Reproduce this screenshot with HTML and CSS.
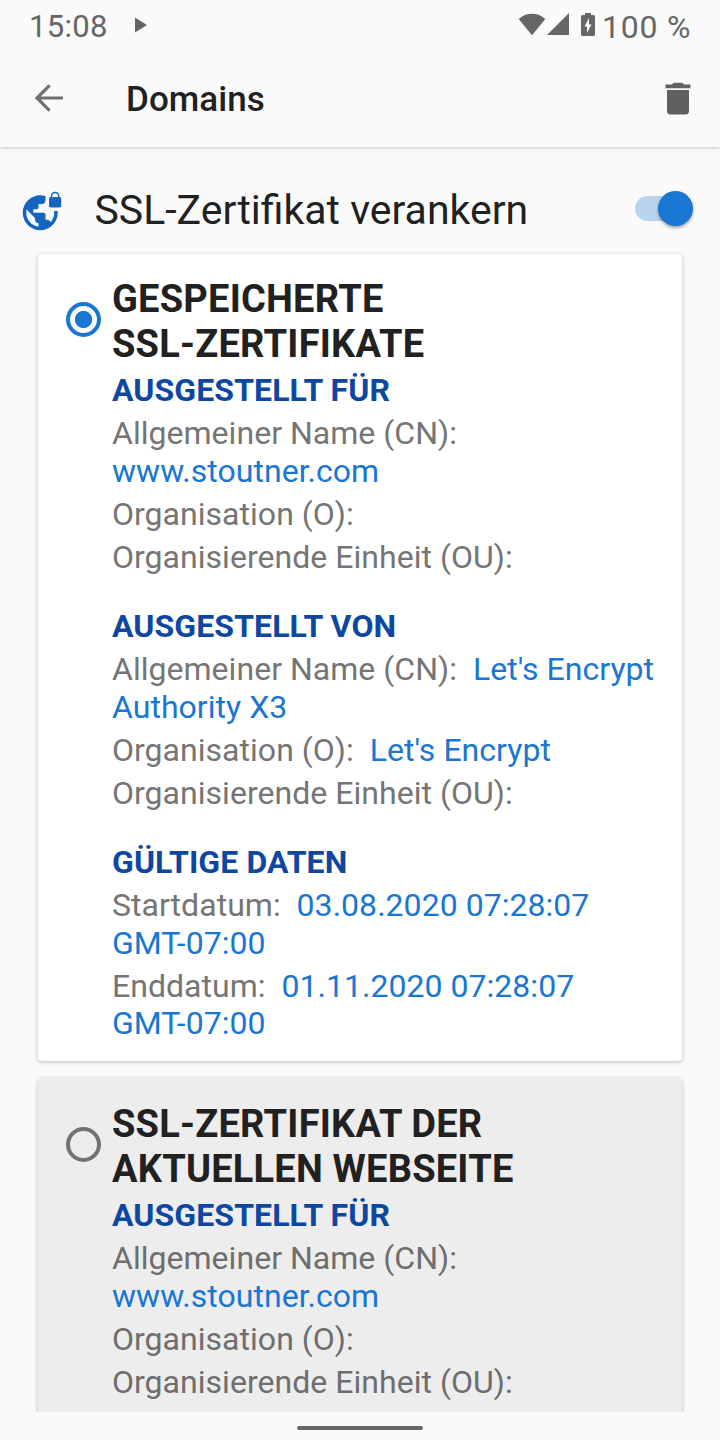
FILE: index.html
```html
<!DOCTYPE html>
<html lang="de">
<head>
<meta charset="utf-8">
<title>Domains</title>
<link rel="stylesheet" href="styles.css">
</head>
<body>
<div class="screen">
  <header class="top">
    <div class="status">
      <span class="clock">15:08</span>
      <svg class="play" width="12" height="16" viewBox="0 0 12 16"><path d="M0 .5L12 8 0 15.500z"/></svg>
      <svg class="wifi" width="28" height="23" viewBox="0 0 28 23"><path d="M14 22.300L.7 5.900C4.500 2.400 9 .7 14 .7s9.500 1.700 13.300 5.200z"/></svg>
      <svg class="cell" width="22" height="22" viewBox="0 0 22 22"><path d="M22 0v22H0z"/></svg>
      <svg class="battery" width="14" height="23" viewBox="0 0 14 23"><path fill-rule="evenodd" d="M4 0h6v2h2.500Q14 2 14 3.500v18q0 1.500-1.500 1.500h-11Q0 23 0 21.500v-18Q0 2 1.500 2H4zM8 5l-4.500 8.500H6V20l4.500-8.500H8z"/></svg>
      <span class="percent">100 %</span>
    </div>
    <div class="toolbar">
      <svg class="back" width="28" height="28" viewBox="0 0 28 28"><path d="M28 14H2M14.600 1.300L1.900 14l12.700 12.700"/></svg>
      <h1 class="title">Domains</h1>
      <svg class="trash" width="26" height="33" viewBox="0 0 26 33"><path d="M2 8h22V29q0 3.500-3.500 3.500h-15Q2 32.500 2 29zM.5 2.500h6.500L9 .7h8l2 1.800h6.500v3.800H.5z"/></svg>
    </div>
  </header>
  <main class="content">
    <div class="pin-row">
      <svg class="globe" width="42" height="42" viewBox="0 0 24 24"><path d="M22 4v-.5C22 2.120 20.880 1 19.500 1S17 2.120 17 3.500V4c-.55 0-1 .45-1 1v4c0 .55.45 1 1 1h5c.55 0 1-.45 1-1V5c0-.55-.45-1-1-1zm-.8 0h-3.400v-.5c0-.94.76-1.700 1.700-1.700s1.700.76 1.700 1.700V4zm-2.280 8c.04.33.08.66.08 1 0 2.080-.8 3.970-2.100 5.390-.26-.81-1-1.390-1.900-1.390h-1v-3c0-.55-.45-1-1-1H7v-2h2c.55 0 1-.45 1-1V8h2c1.100 0 2-.9 2-2V3.460c-.95-.3-1.950-.46-3-.46C5.480 3 1 7.480 1 13s4.480 10 10 10 10-4.480 10-10c0-.34-.02-.67-.05-1h-2.030zM10 20.930c-3.950-.49-7-3.850-7-7.930 0-.62.08-1.210.21-1.790L8 16v1c0 1.100.9 2 2 2v1.930z"/></svg>
      <span class="pin-label">SSL-Zertifikat verankern</span>
      <span class="switch"><span class="thumb"></span></span>
    </div>
    <section class="card">
      <span class="radio radio-on"></span>
      <div class="details">
        <h2>GESPEICHERTE<br>SSL-ZERTIFIKATE</h2>
        <div class="group">
          <h3>AUSGESTELLT FÜR</h3>
          <p>Allgemeiner Name (CN):<br><b>www.stoutner.com</b></p>
          <p>Organisation (O):</p>
          <p>Organisierende Einheit (OU):</p>
        </div>
        <div class="group">
          <h3>AUSGESTELLT VON</h3>
          <p>Allgemeiner Name (CN):&nbsp; <b>Let's Encrypt<br>Authority X3</b></p>
          <p>Organisation (O):&nbsp; <b>Let's Encrypt</b></p>
          <p>Organisierende Einheit (OU):</p>
        </div>
        <div class="group">
          <h3>GÜLTIGE DATEN</h3>
          <p>Startdatum:&nbsp; <b>03.08.2020 07:28:07<br>GMT-07:00</b></p>
          <p>Enddatum:&nbsp; <b>01.11.2020 07:28:07<br>GMT-07:00</b></p>
        </div>
      </div>
    </section>
    <section class="card card-muted">
      <span class="radio"></span>
      <div class="details">
        <h2>SSL-ZERTIFIKAT DER<br>AKTUELLEN WEBSEITE</h2>
        <div class="group">
          <h3>AUSGESTELLT FÜR</h3>
          <p>Allgemeiner Name (CN):<br><b>www.stoutner.com</b></p>
          <p>Organisation (O):</p>
          <p>Organisierende Einheit (OU):</p>
        </div>
      </div>
    </section>
  </main>
  <footer class="navbar"><span class="handle"></span></footer>
</div>
</body>
</html>
```
FILE: styles.css
```css
* { box-sizing: border-box; margin: 0; padding: 0; }
body { background: #fafafa; font-family: Roboto, "Liberation Sans", sans-serif; color: #212121; }
svg { display: block; flex: none; }
.screen { width: 720px; height: 1440px; display: flex; flex-direction: column; overflow: hidden; }

.top { flex: none; height: 147px; background: #fafafa; box-shadow: 0 1px 4px rgba(0,0,0,.2); z-index: 1; }
.status { height: 50px; padding: 0 26px 0 29px; display: flex; align-items: flex-start; color: #666; fill: #666; font-size: 31px; line-height: 36px; letter-spacing: .3px; }
.clock, .percent { padding-top: 9px; white-space: nowrap; }
.clock { width: 106px; }
.play { margin-top: 17px; }
.wifi { margin: 13px 1px 0 auto; }
.cell { margin-top: 13px; }
.battery { margin: 13px 7px 0 12px; }
.percent { width: 92px; font-size: 32px; letter-spacing: .8px; }
.toolbar { height: 97px; padding: 0 29px 2px 35px; display: flex; align-items: center; }
.back { fill: none; stroke: #707070; stroke-width: 3.2; }
.title { flex: 1; padding: 5px 0 0 63px; font-size: 35px; font-weight: 500; line-height: 42px; letter-spacing: .05px; }
.trash { fill: #606060; margin-top: 1px; }

.content { flex: 1; min-height: 0; overflow: hidden; padding: 43px 38px 0; }
.pin-row { height: 63px; margin: 0 -12px 0 -17px; display: flex; align-items: flex-start; }
.globe { fill: #1565c0; }
.pin-label { flex: 1; padding: 0 0 0 31.500px; font-size: 41px; line-height: 41px; white-space: nowrap; }
.switch { flex: none; width: 56px; height: 25px; margin: 6px 3px 0 0; border-radius: 13px; background: #b8d4ef; display: flex; justify-content: flex-end; align-items: center; }
.thumb { flex: none; width: 35px; height: 35px; margin-right: -2px; border-radius: 50%; background: #1976d2; box-shadow: 0 2px 3px rgba(0,0,0,.35); }

.card { height: 807.5px; margin: .5px 0 17px; padding: 23.5px 0 0 28.5px; display: flex; gap: 10.5px; border-radius: 4px; background: #fff; box-shadow: 0 1px 4px rgba(0,0,0,.25); }
.card-muted { background: #ededed; padding-top: 24px; }
.radio { flex: none; width: 35px; height: 35px; margin: 24.500px .5px 0 -.5px; border: 4px solid #737373; border-radius: 50%; }
.radio-on { border-color: #1976d2; background: radial-gradient(circle, #1976d2 8.200px, transparent 9px); }
.details { white-space: nowrap; color: #757575; font-size: 32px; line-height: 37.5px; letter-spacing: .03px; }
.details h2 { margin-bottom: 5px; color: #212121; font-size: 38px; font-weight: 700; line-height: 45px; letter-spacing: .22px; }
.group { display: flex; flex-direction: column; gap: 5.5px; margin-bottom: 32px; }
.group h3 { color: #0d47a1; font-size: 32px; font-weight: 700; line-height: 37.5px; letter-spacing: .1px; }
.group b { color: #1976d2; font-weight: 400; }
.card-muted p { color: #6e6e6e; }

.navbar { flex: none; height: 28px; display: flex; justify-content: center; align-items: center; padding-top: 3px; background: #fafafa; }
.handle { width: 126px; height: 4px; border-radius: 2px; background: #666; }
```
